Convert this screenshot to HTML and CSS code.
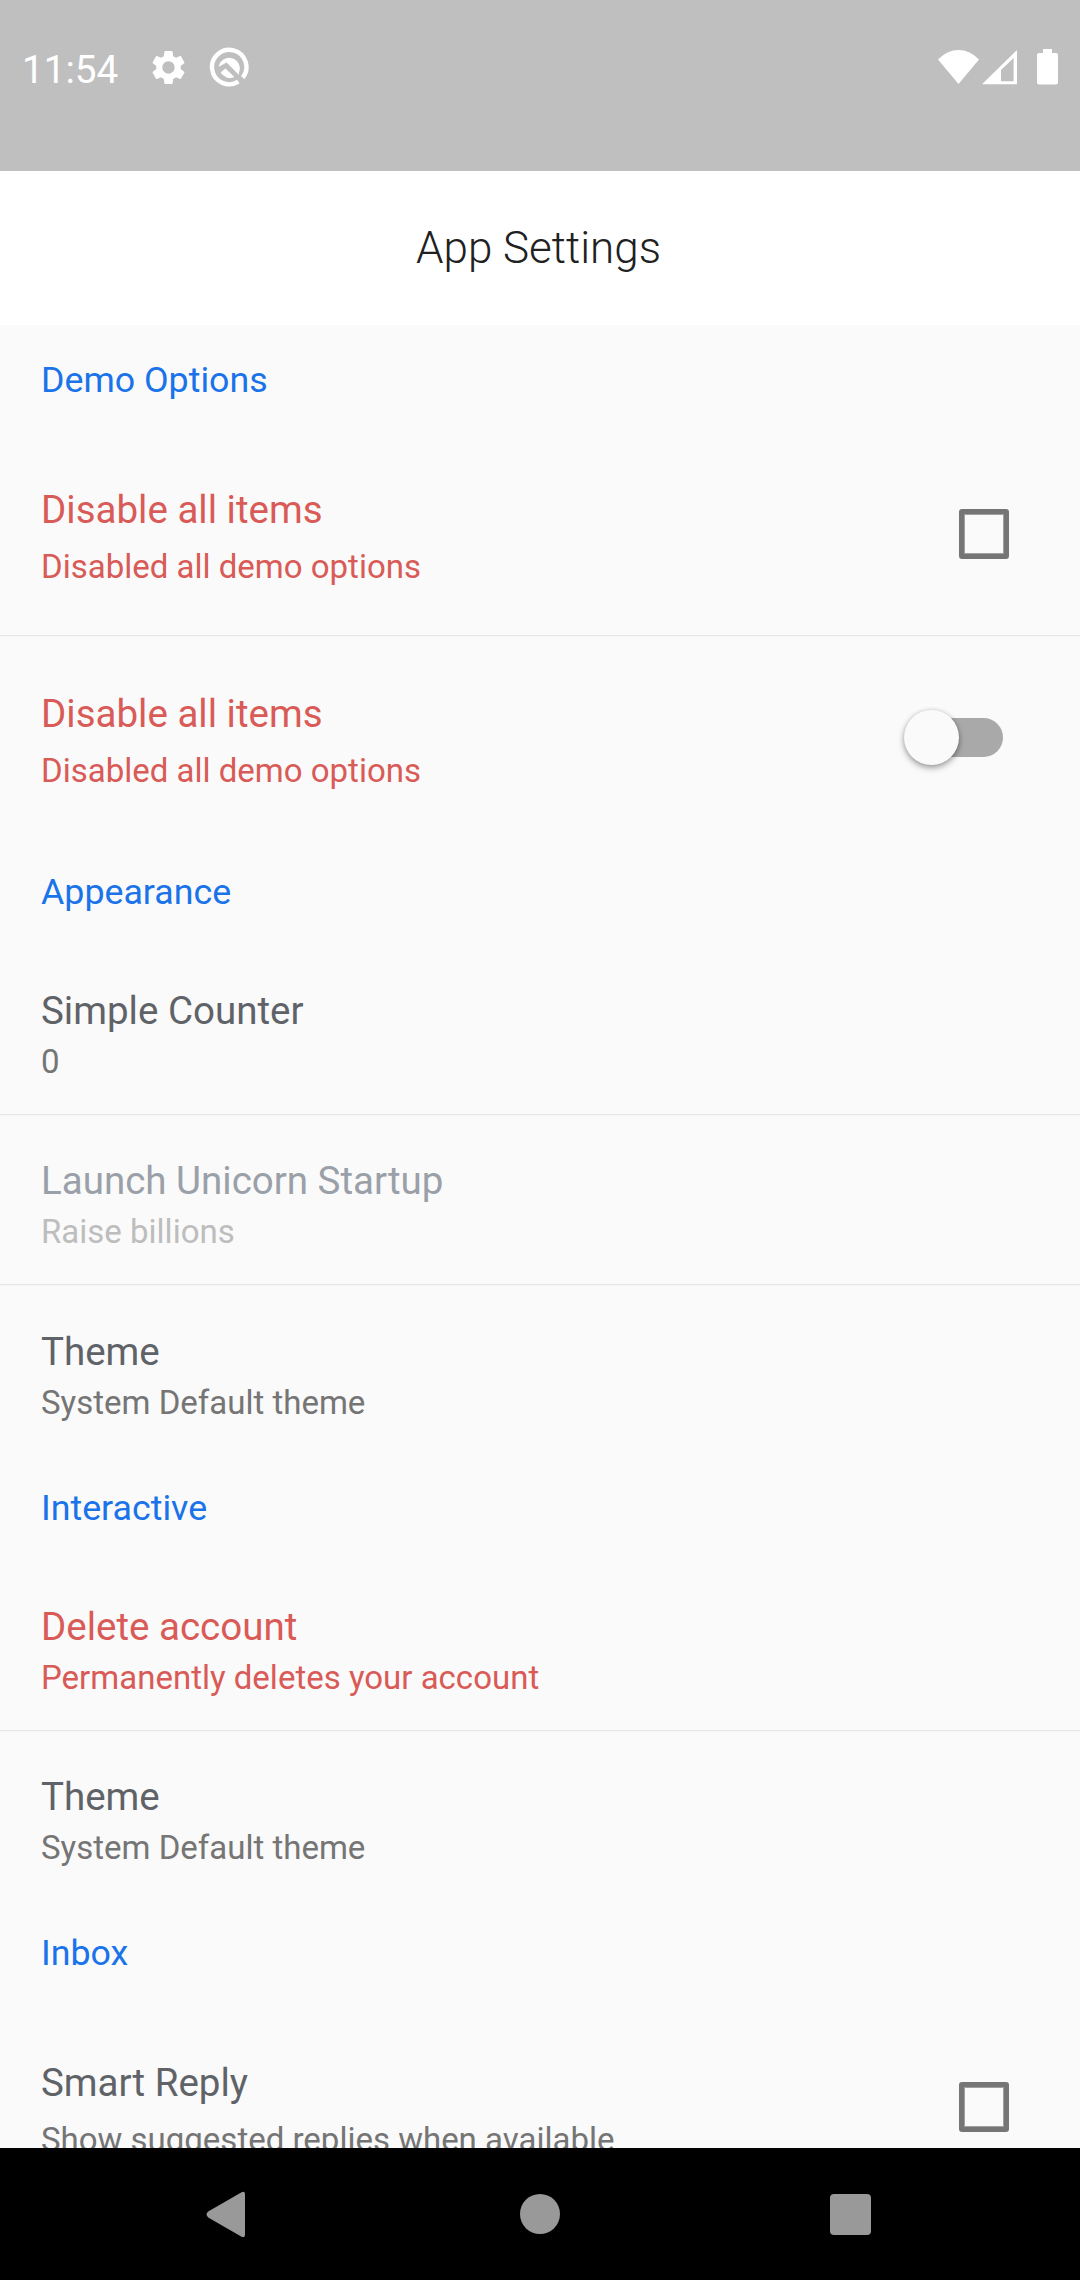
FILE: index.html
```
<!DOCTYPE html>
<html lang="en">
<head>
<meta charset="utf-8">
<title>App Settings</title>
<link rel="stylesheet" href="styles.css">
</head>
<body>
<div class="screen">
  <div class="status">
    <span class="clock">11:54</span>
    <svg class="gear" width="41" height="41" viewBox="0 0 24 24"><path fill="#fff" d="M19.14 12.94c.04-.3.06-.61.06-.94 0-.32-.02-.64-.07-.94l2.03-1.58c.18-.14.23-.41.12-.61l-1.92-3.32c-.12-.22-.37-.29-.59-.22l-2.39.96c-.5-.38-1.03-.7-1.62-.94l-.36-2.54c-.04-.24-.24-.41-.48-.41h-3.84c-.24 0-.43.17-.47.41l-.36 2.54c-.59.24-1.13.57-1.62.94l-2.39-.96c-.22-.08-.47 0-.59.22L2.74 8.87c-.12.21-.08.47.12.61l2.03 1.58c-.05.3-.09.63-.09.94s.02.64.07.94l-2.03 1.58c-.18.14-.23.41-.12.61l1.92 3.32c.12.22.37.29.59.22l2.39-.96c.5.38 1.03.7 1.62.94l.36 2.54c.05.24.24.41.48.41h3.84c.24 0 .44-.17.47-.41l.36-2.54c.59-.24 1.13-.56 1.62-.94l2.39.96c.22.08.47 0 .59-.22l1.92-3.32c.12-.22.07-.47-.12-.61l-2.01-1.58zM12 15.6c-1.98 0-3.6-1.62-3.6-3.6s1.62-3.6 3.6-3.6 3.6 1.62 3.6 3.6-1.62 3.6-3.6 3.6z"/></svg>
    <svg class="q" width="40" height="40" viewBox="0 0 40 40">
      <path fill="none" stroke="#fff" stroke-width="4.4" d="M29.4 34.6A17.2 17.2 0 1 1 33.8 30.600"/>
      <path fill="#fff" d="M9.700 19.800A10.600 10.600 0 1 1 30 25.400V28L17.600 15.600zM11.600 25.600l4.800-4.200 9 8.600A11 11 0 0 1 11.600 25.600z"/>
    </svg>
    <svg class="signals" width="122" height="37" viewBox="0 0 122 37">
      <path fill="#fff" d="M0 11.5Q9 2 20.5 2T41 11.5L20.5 36z"/>
      <path fill="#fff" fill-rule="evenodd" d="M44 36.3L79 2v34.3zM63 22v11.3h12.6V10z"/>
      <path fill="#fff" d="M105 1h9v4h4a2 2 0 0 1 2 2v27.5a2 2 0 0 1-2 2h-17a2 2 0 0 1-2-2V7a2 2 0 0 1 2-2h4z"/>
    </svg>
  </div>
  <header class="bar">App Settings</header>
  <main class="list">
    <h2 class="section">Demo Options</h2>
    <div class="row tall danger">
      <div class="text"><div class="title">Disable all items</div><div class="sub">Disabled all demo options</div></div>
      <span class="checkbox"></span>
    </div>
    <div class="divider wide"></div>
    <div class="row tall danger second">
      <div class="text"><div class="title">Disable all items</div><div class="sub">Disabled all demo options</div></div>
      <span class="switch"><span class="thumb"></span></span>
    </div>
    <h2 class="section">Appearance</h2>
    <div class="row"><div class="text"><div class="title">Simple Counter</div><div class="sub">0</div></div></div>
    <div class="divider"></div>
    <div class="row disabled"><div class="text"><div class="title">Launch Unicorn Startup</div><div class="sub">Raise billions</div></div></div>
    <div class="divider wide"></div>
    <div class="row last"><div class="text"><div class="title">Theme</div><div class="sub">System Default theme</div></div></div>
    <h2 class="section">Interactive</h2>
    <div class="row danger"><div class="text"><div class="title">Delete account</div><div class="sub">Permanently deletes your account</div></div></div>
    <div class="divider"></div>
    <div class="row last"><div class="text"><div class="title">Theme</div><div class="sub">System Default theme</div></div></div>
    <h2 class="section">Inbox</h2>
    <div class="row tall">
      <div class="text"><div class="title">Smart Reply</div><div class="sub">Show suggested replies when available</div></div>
      <span class="checkbox"></span>
    </div>
  </main>
  <nav class="nav">
    <svg width="1080" height="132" viewBox="0 0 1080 132" fill="#999">
      <path d="M208.2 63.6L241.6 44.3q3.4-1.5 3.4 2V86.7q0 3.5-3.4 2L208.2 69.4q-3.4-2.9 0-5.8z"/>
      <circle cx="540" cy="66" r="20"/>
      <rect x="830" y="46" width="41" height="41" rx="4"/>
    </svg>
  </nav>
</div>
</body>
</html>
```
FILE: styles.css
```
body {
  margin: 0;
  font-family: Roboto, "Liberation Sans", sans-serif;
}

.screen {
  width: 1080px;
  height: 2280px;
  display: flex;
  flex-direction: column;
  background: #fafafa;
  overflow: hidden;
}

.status {
  height: 171px;
  flex: none;
  box-sizing: border-box;
  padding: 47px 20px 0 22px;
  display: flex;
  align-items: flex-start;
  background: #bfbfbf;
  color: #fff;
}

.clock {
  width: 126px;
  font-size: 38.7px;
  line-height: 45px;
}

.gear {
  margin-right: 20px;
}

.signals {
  margin: 1px 0 0 auto;
}

.bar {
  height: 154px;
  flex: none;
  box-sizing: border-box;
  padding: 1px 3px 0 0;
  background: #fff;
  color: #212121;
  font-size: 44px;
  font-weight: 300;
  line-height: 153px;
  text-align: center;
}

.list {
  flex: 1;
  min-height: 0;
  overflow: hidden;
}

.section {
  height: 110px;
  box-sizing: border-box;
  margin: 0;
  padding: 34px 41px 0;
  color: #1a73e8;
  font-size: 35.75px;
  font-weight: 400;
  line-height: 42px;
}

.row {
  display: flex;
  height: 167px;
  box-sizing: border-box;
  padding: 41px 71px 0 41px;
  justify-content: space-between;
}

.row.last {
  height: 165px;
}

.row.tall {
  height: 200px;
  padding-top: 52px;
}

.row.tall.second {
  height: 198px;
}

.title {
  color: #5f6368;
  font-size: 38.5px;
  line-height: 45px;
}

.sub {
  margin-top: 9px;
  color: #757575;
  font-size: 33px;
  line-height: 39px;
}

.tall .sub {
  margin-top: 15px;
}

.danger .title,
.danger .sub {
  color: #d95b57;
}

.disabled .title {
  color: #9aa0a8;
}

.disabled .sub {
  color: #bdbdbd;
}

.divider {
  height: 3px;
  background: linear-gradient(#e6e6e6 1px, #f5f5f5 1px 2px, transparent 2px);
}

.divider.wide {
  height: 4px;
}

.checkbox {
  width: 50px;
  height: 50px;
  box-sizing: border-box;
  margin-top: 22px;
  border: 5px solid #757575;
  border-radius: 3px;
  box-shadow: inset 0 0 0 1px #a0a0a0;
}

.switch {
  width: 99px;
  height: 55px;
  margin: 19.4px 6px 0 0;
  display: flex;
  align-items: center;
}

.switch::after {
  content: "";
  width: 70px;
  height: 39px;
  margin-left: -26px;
  border-radius: 0 19.5px 19.5px 0;
  background: #a9a9a9;
}

.thumb {
  width: 55px;
  height: 55px;
  flex: none;
  border-radius: 50%;
  background: #fafafa;
  box-shadow: 0 3px 6px rgba(0, 0, 0, .35), 0 0 4px rgba(0, 0, 0, .12);
  z-index: 1;
}

.nav {
  height: 132px;
  flex: none;
  background: #000;
}

.nav svg {
  display: block;
}
```
